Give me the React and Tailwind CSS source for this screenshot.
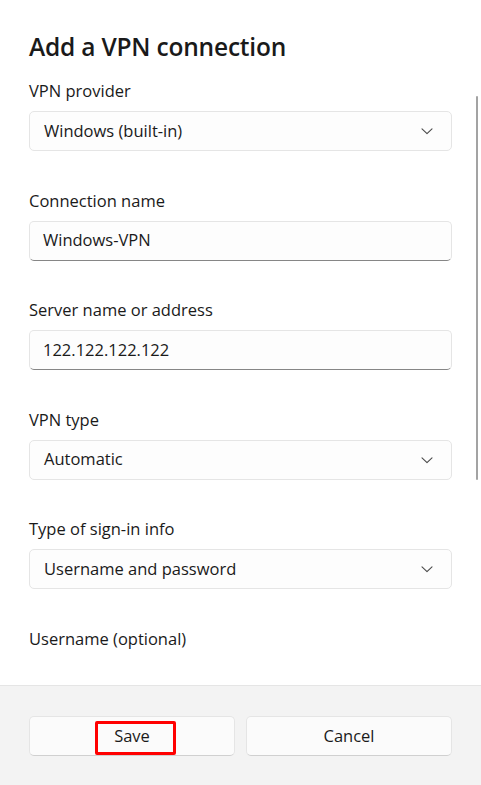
import React from "react";

const Chevron = () => (
  <svg width="12" height="12" viewBox="0 0 12 12" fill="none" className="text-[#4a4a4a]">
    <path d="M1 3.8 L6 8.6 L11 3.8" stroke="currentColor" strokeWidth="1.1" strokeLinecap="round" strokeLinejoin="round" />
  </svg>
);

const Dropdown = ({ value }) => (
  <div className="h-10 flex items-center justify-between pl-[14px] pr-[18px] bg-[#fdfdfd] border border-[#e5e5e5] rounded-[5px]">
    <span>{value}</span>
    <Chevron />
  </div>
);

const TextBox = ({ value }) => (
  <div className="h-10 flex items-center pl-[13px] bg-[#fdfdfd] border border-[#e5e5e5] border-b-[#868686] rounded-[5px]">
    <span>{value}</span>
  </div>
);

const Field = ({ label, children, first }) => (
  <div className={first ? "" : "mt-[37.5px]"}>
    <div className="h-6 leading-6">{label}</div>
    <div className="mt-2">{children}</div>
  </div>
);

export default function App() {
  return (
    <div
      className="relative w-[481px] h-[785px] bg-white text-[#1a1a1a] flex flex-col overflow-hidden"
      style={{ fontFamily: '"Open Sans", "Noto Sans", sans-serif' }}
    >
      <div className="flex-1 px-[29px] text-[16.5px]">
        <h1 className="mt-[30px] h-[34px] leading-[34px] text-[24.5px] font-semibold tracking-[-0.2px]">
          Add a VPN connection
        </h1>
        <div className="mt-[15px]">
          <Field label="VPN provider" first>
            <Dropdown value="Windows (built-in)" />
          </Field>
          <Field label="Connection name">
            <TextBox value="Windows-VPN" />
          </Field>
          <Field label="Server name or address">
            <TextBox value="122.122.122.122" />
          </Field>
          <Field label="VPN type">
            <Dropdown value="Automatic" />
          </Field>
          <Field label="Type of sign-in info">
            <Dropdown value="Username and password" />
          </Field>
          <Field label="Username (optional)" />
        </div>
      </div>

      {/* scrollbar */}
      <div className="absolute left-[476px] top-[96px] w-[2px] h-[384px] rounded-full bg-[#a3a3a3]" />

      {/* footer */}
      <div className="h-[100px] shrink-0 bg-[#f3f3f3] border-t border-[#e5e5e5] px-[29px] pt-[30px] flex gap-[11px] text-[16.5px]">
        <button className="relative flex-1 h-10 bg-[#fbfbfb] border border-[#e5e5e5] border-b-[#d0d0d0] rounded-[5px] flex items-center justify-center">
          Save
          <span className="absolute left-[65px] top-[4px] w-[81px] h-[34px] border-[3px] border-[#ff0000] rounded-[2px]" />
        </button>
        <button className="flex-1 h-10 bg-[#fbfbfb] border border-[#e5e5e5] border-b-[#d0d0d0] rounded-[5px] flex items-center justify-center">
          Cancel
        </button>
      </div>
    </div>
  );
}
